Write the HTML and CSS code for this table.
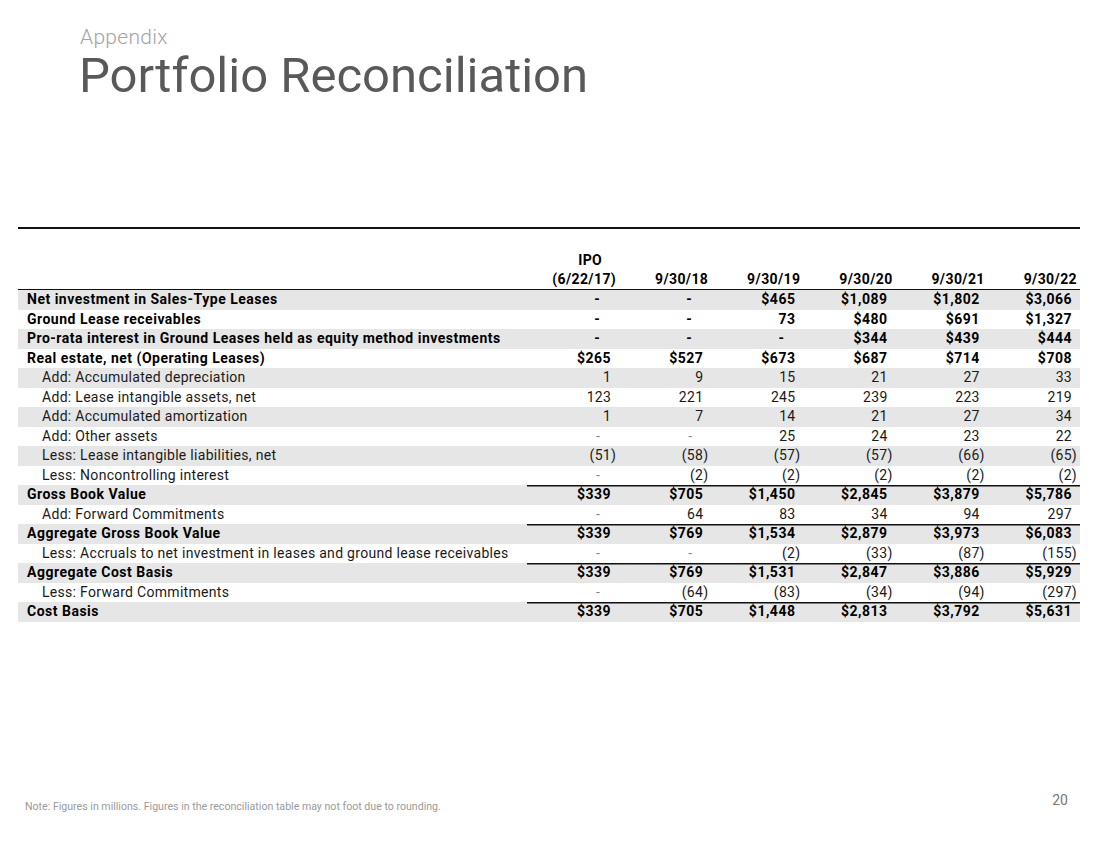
FILE: index.html
```html
<!DOCTYPE html>
<html lang="en">
<head>
<meta charset="utf-8">
<title>Portfolio Reconciliation</title>
<link rel="stylesheet" href="styles.css">
</head>
<body>
<div class="slide">
  <header class="head">
    <div class="kicker">Appendix</div>
    <h1 class="title">Portfolio Reconciliation</h1>
  </header>

  <section class="tablewrap">
    <table class="recon">
      <colgroup>
        <col class="c-label"><col class="c-num"><col class="c-num"><col class="c-num"><col class="c-num"><col class="c-num"><col class="c-num">
      </colgroup>
      <thead>
        <tr class="hdr">
          <th></th>
          <th><span class="ipo">IPO</span><span>(6/22/17)</span></th>
          <th>9/30/18</th>
          <th>9/30/19</th>
          <th>9/30/20</th>
          <th>9/30/21</th>
          <th>9/30/22</th>
        </tr>
      </thead>
      <tbody>
        <tr class="b g"><td>Net investment in Sales-Type Leases</td><td class="d">-</td><td class="d">-</td><td>$465</td><td>$1,089</td><td>$1,802</td><td>$3,066</td></tr>
        <tr class="b"><td>Ground Lease receivables</td><td class="d">-</td><td class="d">-</td><td>73</td><td>$480</td><td>$691</td><td>$1,327</td></tr>
        <tr class="b g"><td>Pro-rata interest in Ground Leases held as equity method investments</td><td class="d">-</td><td class="d">-</td><td class="d">-</td><td>$344</td><td>$439</td><td>$444</td></tr>
        <tr class="b"><td>Real estate, net (Operating Leases)</td><td>$265</td><td>$527</td><td>$673</td><td>$687</td><td>$714</td><td>$708</td></tr>
        <tr class="s g"><td>Add: Accumulated depreciation</td><td>1</td><td>9</td><td>15</td><td>21</td><td>27</td><td>33</td></tr>
        <tr class="s"><td>Add: Lease intangible assets, net</td><td>123</td><td>221</td><td>245</td><td>239</td><td>223</td><td>219</td></tr>
        <tr class="s g"><td>Add: Accumulated amortization</td><td>1</td><td>7</td><td>14</td><td>21</td><td>27</td><td>34</td></tr>
        <tr class="s"><td>Add: Other assets</td><td class="d">-</td><td class="d">-</td><td>25</td><td>24</td><td>23</td><td>22</td></tr>
        <tr class="s g"><td>Less: Lease intangible liabilities, net</td><td class="p">(51)</td><td class="p">(58)</td><td class="p">(57)</td><td class="p">(57)</td><td class="p">(66)</td><td class="p">(65)</td></tr>
        <tr class="s"><td>Less: Noncontrolling interest</td><td class="d">-</td><td class="p">(2)</td><td class="p">(2)</td><td class="p">(2)</td><td class="p">(2)</td><td class="p">(2)</td></tr>
        <tr class="b g tot"><td>Gross Book Value</td><td>$339</td><td>$705</td><td>$1,450</td><td>$2,845</td><td>$3,879</td><td>$5,786</td></tr>
        <tr class="s"><td>Add: Forward Commitments</td><td class="d">-</td><td>64</td><td>83</td><td>34</td><td>94</td><td>297</td></tr>
        <tr class="b g tot"><td>Aggregate Gross Book Value</td><td>$339</td><td>$769</td><td>$1,534</td><td>$2,879</td><td>$3,973</td><td>$6,083</td></tr>
        <tr class="s"><td>Less: Accruals to net investment in leases and ground lease receivables</td><td class="d">-</td><td class="d">-</td><td class="p">(2)</td><td class="p">(33)</td><td class="p">(87)</td><td class="p">(155)</td></tr>
        <tr class="b g tot"><td>Aggregate Cost Basis</td><td>$339</td><td>$769</td><td>$1,531</td><td>$2,847</td><td>$3,886</td><td>$5,929</td></tr>
        <tr class="s"><td>Less: Forward Commitments</td><td class="d">-</td><td class="p">(64)</td><td class="p">(83)</td><td class="p">(34)</td><td class="p">(94)</td><td class="p">(297)</td></tr>
        <tr class="b g tot"><td>Cost Basis</td><td>$339</td><td>$705</td><td>$1,448</td><td>$2,813</td><td>$3,792</td><td>$5,631</td></tr>
      </tbody>
    </table>
  </section>

  <footer class="foot">
    <p class="note">Note: Figures in millions. Figures in the reconciliation table may not foot due to rounding.</p>
    <span class="pageno">20</span>
  </footer>
</div>
</body>
</html>
```

FILE: styles.css
```css
* { box-sizing: border-box; }
html, body { margin: 0; padding: 0; background: #fff; }
body { font-family: Roboto, "Liberation Sans", sans-serif; color: #000; }

.slide {
  width: 1100px;
  height: 849px;
  display: flex;
  flex-direction: column;
}

.head { padding: 25px 0 0 79px; }
.kicker {
  font-size: 21px;
  line-height: 25px;
  color: #a3a3a3;
  font-weight: 300;
  padding-left: 1px;
  letter-spacing: 0.3px;
}
.title {
  margin: 0;
  font-size: 49px;
  line-height: 52px;
  font-weight: 400;
  color: #58595b;
}

.tablewrap {
  margin: 125px 20px 0 18px;
  border-top: 2px solid #111;
}

.recon {
  width: 100%;
  border-collapse: separate;
  border-spacing: 0;
  table-layout: fixed;
  font-size: 14px;
}
.c-label { width: 509px; }

.hdr th {
  font-weight: 700;
  text-align: right;
  vertical-align: bottom;
  padding: 22px 3px 0 0;
  line-height: 19px;
  height: 60px;
  letter-spacing: 0.4px;
  border-bottom: 1px solid #111;
}
.hdr th span { display: block; }
.hdr th .ipo { padding-right: 14px; }

.recon td {
  height: 19.5px;
  line-height: 19.5px;
  padding: 0 8px 0 0;
  text-align: right;
  white-space: nowrap;
}
.recon td:first-child { text-align: left; padding: 0 0 0 9px; }
.recon tr.s td:first-child { padding-left: 24px; }
.recon tr.b td { font-weight: 700; letter-spacing: 0.5px; }
.recon tr.s td { font-weight: 400; color: #1a1a1a; letter-spacing: 0.3px; }
.recon tr.g td { background: #e6e6e6; }
.recon td.p { padding-right: 3px; }
.recon td.d { padding-right: 19px; }
.recon tr.s td.d { color: #888; }
.recon tr.tot td:not(:first-child) { box-shadow: inset 0 1.5px 0 #111; }

.foot {
  margin-top: auto;
  display: flex;
  justify-content: space-between;
  align-items: flex-start;
  padding: 0 32px 36px 25px;
}
.note {
  margin: 8px 0 0;
  font-size: 10.6px;
  color: #9a9a9a;
}
.pageno {
  font-size: 14px;
  color: #777;
}
```
